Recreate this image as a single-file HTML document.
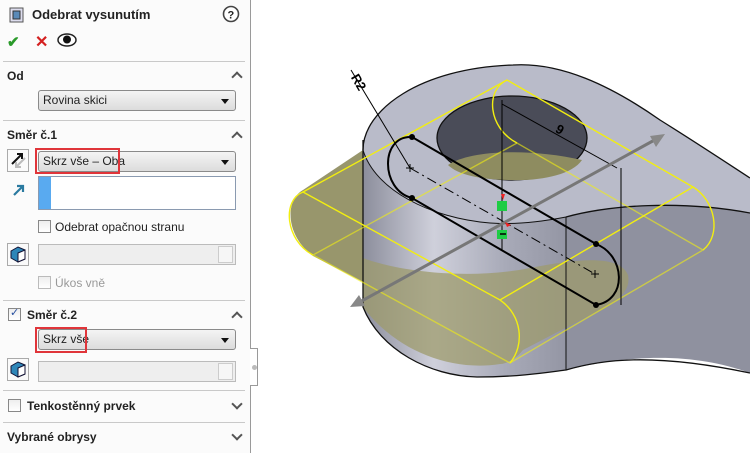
<!DOCTYPE html>
<html><head><meta charset="utf-8"><style>
*{margin:0;padding:0;box-sizing:border-box}
body{width:750px;height:453px;background:#fff;position:relative;overflow:hidden;font-family:"Liberation Sans",Arial,sans-serif;font-size:12px;color:#222}
.panel{position:absolute;left:0;top:0;width:251px;height:453px;background:#fbfbfb;border-right:1px solid #9a9a9a}
.a{position:absolute}
.b{font-weight:bold;font-size:12px}
.sep{position:absolute;left:3px;width:242px;height:1px;background:#c9c9c9}
.dd{position:absolute;left:38px;width:198px;height:21px;border:1px solid #8a8a8a;border-radius:3px;background:linear-gradient(#f4f4f4,#dcdcdc);font-size:12px;line-height:19px;padding-left:4px}
.dd:after{content:"";position:absolute;right:6px;top:8px;border-left:4px solid transparent;border-right:4px solid transparent;border-top:5px solid #111}
.red{position:absolute;border:2px solid #e0353a}
.chev{position:absolute;left:233px;width:8px;height:8px;border-left:2px solid #555;border-top:2px solid #555}
.up{transform:rotate(45deg)}
.dn{transform:rotate(225deg)}
.cb{position:absolute;width:13px;height:13px;border:1px solid #888;background:linear-gradient(#eee,#fff)}
.spin{position:absolute;left:38px;width:198px;height:21px;border:1px solid #bbb;background:#eee}
.spin i{position:absolute;right:2px;top:1px;width:15px;height:17px;border:1px solid #ccc;background:#f6f6f6}
.ib{position:absolute;left:7px;width:22px;height:23px;border:1px solid #aaa;background:#fafafa}
</style></head><body>
<svg class="a" style="left:0;top:0" width="750" height="453">
<defs><linearGradient id="cg" x1="0" x2="1"><stop offset="0" stop-color="#8c8e9c"/><stop offset=".35" stop-color="#cfd0db"/><stop offset=".7" stop-color="#a8aab8"/><stop offset="1" stop-color="#9496a4"/></linearGradient></defs>
<!-- arm -->
<path d="M566,217 C610,205 680,200 750,213 L750,373 C700,355 640,352 566,370 Z" fill="#8f919f"/>
<!-- cylinder side -->
<path d="M363,140 L363,307 C380,350 430,376 477,377 C520,377 550,372 566,370 L566,217 C540,222 515,225 490,223 C430,218 375,190 363,150 Z" fill="url(#cg)"/>
<!-- top face -->
<path d="M363,150 C363,110 420,68 513,65 C560,62 610,85 660,120 C700,145 730,165 750,178 L750,213 C680,200 610,205 566,217 C540,222 515,225 490,223 C430,218 375,190 363,150 Z" fill="#b9bbc9"/>
<!-- olive extrusion parts -->
<path d="M363,150 L303,190 C285,200 285,235 313,256 L363,282 Z" fill="#8d8b5c" opacity=".9"/>
<path d="M363,258 C400,272 470,280 530,268 C580,258 620,255 628,275 C632,295 610,305 590,315 L523,350 C515,360 505,364 500,364 C450,372 395,350 363,307 Z" fill="#9d9b6c" opacity=".75"/>
<path d="M363,150 C363,110 420,68 513,65 C560,62 610,85 660,120 C700,145 730,165 750,178" fill="none" stroke="#111" stroke-width="1.3"/>
<path d="M566,217 C610,205 680,200 750,213" fill="none" stroke="#111" stroke-width="1.3"/>
<path d="M363,150 C375,190 430,218 490,223 C515,225 540,222 566,217" fill="none" stroke="#111" stroke-width="1"/>
<path d="M363,140 L363,307 C380,350 430,376 477,377 C520,377 550,372 566,370 C600,360 650,352 750,373" fill="none" stroke="#111" stroke-width="1.3"/>
<line x1="566" y1="217" x2="566" y2="370" stroke="#111"/>
<!-- hole -->
<ellipse cx="512" cy="138" rx="75" ry="42" fill="#4a4c58" stroke="#111" stroke-width="1.3"/>
<path d="M448,165 C470,150 530,148 582,160 C572,175 540,181 512,180 C482,180 458,175 448,165Z" fill="#8e8c60"/>
<!-- yellow lines -->
<g stroke="#f2ee10" stroke-width="1.4" fill="none">
<path d="M303,192 L507,80 L693,187 L500,300 Z"/>
<path d="M313,255 L517,143 L703,250 L510,363 Z" opacity=".6"/>
<path d="M303,192 C282,200 285,240 313,255"/>
<path d="M693,187 C715,200 722,235 703,250"/>
<path d="M507,80 C485,90 488,128 517,143"/>
<path d="M500,300 C522,315 525,345 510,363"/>
</g>
<!-- sketch slot -->
<g stroke="#000" fill="none" stroke-width="2">
<path d="M412,137 L596,244 C625,255 628,300 596,305 L412,198 C380,190 380,135 412,137 Z"/>
</g>
<g fill="#000"><circle cx="412" cy="137" r="3"/><circle cx="412" cy="198" r="3"/><circle cx="596" cy="244" r="3"/><circle cx="596" cy="305" r="3"/></g>
<line x1="410" y1="168" x2="595" y2="274" stroke="#000" stroke-dasharray="10,4,2,4"/>
<path d="M406,168h8M410,164v8M591,274h8M595,270v8" stroke="#000"/>
<line x1="351" y1="70" x2="410" y2="168" stroke="#000"/>
<text x="352" y="85" font-size="13" font-weight="bold" transform="rotate(60 358 80)">R2</text>
<line x1="502" y1="100" x2="502" y2="250" stroke="#000"/>
<line x1="621" y1="168" x2="621" y2="305" stroke="#000"/>
<line x1="502" y1="104" x2="617" y2="168" stroke="#000"/>
<text x="556" y="134" font-size="13" font-weight="bold" transform="rotate(30 560 130)">9</text>
<!-- arrow -->
<line x1="358" y1="303" x2="660" y2="137" stroke="#777" stroke-width="3"/>
<path d="M665,134 L650,136 L656,147 Z M350,307 L365,306 L359,295 Z" fill="#888"/>
<rect x="497" y="201" width="10" height="10" fill="#1ecc44"/>
<rect x="497" y="230" width="10" height="9" fill="#1ecc44"/>
<path d="M500,234h6" stroke="#000" stroke-width="1.5"/>
<path d="M503,200 l-2,-6 l4,0z M505,222 l6,3 l-4,2z" fill="#e22"/>
</svg>

<div class="panel">
<svg class="a" style="left:9px;top:7px" width="16" height="16"><rect x="1" y="1" width="13" height="14" fill="#dde" stroke="#555"/><rect x="4" y="4" width="7" height="8" fill="#5a8ab8" stroke="#333"/></svg>
<div class="a b" style="left:32px;top:7px;font-size:13px">Odebrat vysunutím</div>
<svg class="a" style="left:222px;top:5px" width="18" height="18"><circle cx="9" cy="9" r="7.5" fill="#fff" stroke="#444" stroke-width="1.6"/><text x="5.5" y="13.5" font-size="11" font-weight="bold" fill="#222">?</text></svg>
<div class="a" style="left:7px;top:33px;color:#2a9a2a;font-size:15px;font-weight:bold">✔</div>
<div class="a" style="left:35px;top:32px;color:#d42020;font-size:16px;font-weight:bold">✕</div>
<svg class="a" style="left:57px;top:33px" width="20" height="14"><ellipse cx="10" cy="7" rx="9" ry="6" fill="#fff" stroke="#222" stroke-width="1.5"/><circle cx="10" cy="6.5" r="4" fill="#111"/></svg>
<div class="sep" style="top:61px"></div>
<div class="a b" style="left:7px;top:69px">Od</div><div class="chev up" style="top:73px"></div>
<div class="dd" style="top:90px">Rovina skici</div>
<div class="sep" style="top:120px"></div>
<div class="a b" style="left:7px;top:128px">Směr č.1</div><div class="chev up" style="top:133px"></div>
<div class="ib" style="top:149px"><svg width="20" height="20"><path d="M4,14 L14,4 M9,4 h5 v5" stroke="#111" stroke-width="2" fill="none"/><path d="M17,8 L8,17 M8,12 v5 h5" stroke="#bbb" stroke-width="2" fill="none"/></svg></div>
<div class="dd" style="top:151px">Skrz vše – Oba</div>
<div class="red" style="left:35px;top:148px;width:85px;height:26px"></div>
<svg class="a" style="left:12px;top:183px" width="14" height="14"><path d="M2,12 L11,3 M5,3 h6 v6" stroke="#2a7aa0" stroke-width="2.2" fill="none"/></svg>
<div class="a" style="left:38px;top:176px;width:198px;height:34px;border:1px solid #8a9ab0;background:#fff"><div style="width:12px;height:32px;background:#59aaf0"></div></div>
<div class="cb" style="left:38px;top:220px"></div><div class="a" style="left:55px;top:220px">Odebrat opačnou stranu</div>
<div class="ib" style="top:243px"><svg width="20" height="20"><path d="M3,7 L10,3 L17,6 L17,15 L10,18 L3,14 Z" fill="#2e86b8" stroke="#113" /><path d="M10,9 L17,6 L17,15 L10,18Z" fill="#fff" stroke="#113"/></svg></div>
<div class="spin" style="top:244px"><i></i></div>
<div class="cb" style="left:38px;top:276px;border-color:#bbb"></div><div class="a" style="left:55px;top:276px;color:#999">Úkos vně</div>
<div class="sep" style="top:300px"></div>
<div class="cb" style="left:8px;top:308px"><span style="position:absolute;left:1px;top:-3px;font-size:11px;color:#2850a0">✓</span></div>
<div class="a b" style="left:27px;top:308px">Směr č.2</div><div class="chev up" style="top:313px"></div>
<div class="dd" style="top:329px">Skrz vše</div>
<div class="red" style="left:35px;top:327px;width:52px;height:26px"></div>
<div class="ib" style="top:358px"><svg width="20" height="20"><path d="M3,7 L10,3 L17,6 L17,15 L10,18 L3,14 Z" fill="#2e86b8" stroke="#113"/><path d="M10,9 L17,6 L17,15 L10,18Z" fill="#fff" stroke="#113"/></svg></div>
<div class="spin" style="top:361px"><i></i></div>
<div class="sep" style="top:390px"></div>
<div class="cb" style="left:8px;top:399px"></div>
<div class="a b" style="left:27px;top:399px">Tenkostěnný prvek</div><div class="chev dn" style="top:400px"></div>
<div class="sep" style="top:422px"></div>
<div class="a b" style="left:7px;top:430px">Vybrané obrysy</div><div class="chev dn" style="top:431px"></div>
</div>
<div class="a" style="left:250px;top:348px;width:8px;height:38px;border:1px solid #9a9a9a;border-left:none;background:#fff"></div>
<div class="a" style="left:252px;top:365px;width:5px;height:5px;border-radius:50%;background:#bbb"></div>
</body></html>
